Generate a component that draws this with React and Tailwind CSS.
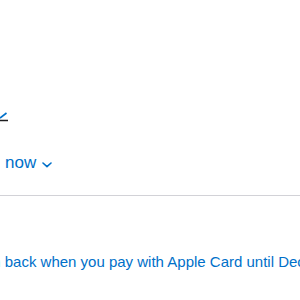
import React from 'react';

const blue = 'text-[#0070c9]';

export default function App() {
  return (
    <div className="w-[300px] h-[300px] overflow-hidden bg-white font-['Liberation_Sans',Arial,sans-serif]">
      {/* cut-off tail of the heading mark */}
      <div className="pt-[111px] h-[123px]">
        <svg width="10" height="11" viewBox="0 0 10 11" className="block">
          <path d="M0 7 L6.5 2" stroke="#0070c9" strokeWidth="1.6" fill="none" />
          <path d="M0 9.5 H8" stroke="#1d1d1f" strokeWidth="1.5" fill="none" />
        </svg>
      </div>

      {/* expand link */}
      <div className={`mt-[30px] flex items-center gap-[6px] pl-[5px] text-[17px] leading-[20px] ${blue}`}>
        <span>now</span>
        <svg width="10" height="6" viewBox="0 0 10 6" className="mt-[3px]">
          <path d="M1 1 L5 4.6 L9 1" stroke="#0070c9" strokeWidth="1.6" fill="none" strokeLinecap="round" strokeLinejoin="round" />
        </svg>
      </div>

      <div className="mt-[22px] h-px w-full bg-[#d2d2d7]" />

      {/* footnote link, scrolled off to the left */}
      <div className="mt-[57px] whitespace-nowrap">
        <p className={`ml-[-72px] text-[15px] leading-[18px] ${blue}`}>
          Daily Cash back when you pay with Apple Card until December 31
        </p>
      </div>
    </div>
  );
}
